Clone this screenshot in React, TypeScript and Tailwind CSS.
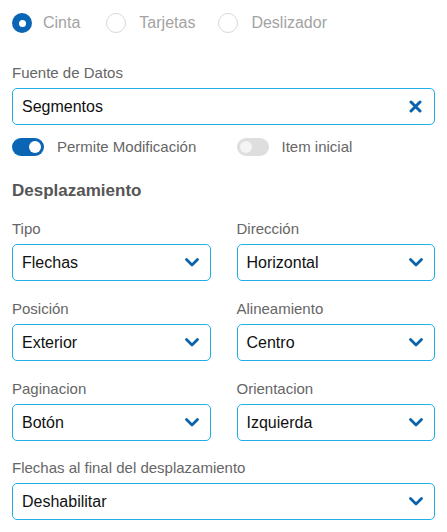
type Option = { label: string; selected?: boolean };

const radios: Option[] = [
  { label: "Cinta", selected: true },
  { label: "Tarjetas" },
  { label: "Deslizador" },
];

const Chevron = () => (
  <svg width="14" height="9" viewBox="0 0 14 9" className="text-[#0a62ad]">
    <polyline points="1.5,1.5 7,7 12.5,1.5" fill="none" stroke="currentColor" strokeWidth="2.8" strokeLinecap="round" strokeLinejoin="round" />
  </svg>
);

const Clear = () => (
  <svg width="13" height="13" viewBox="0 0 13 13" className="text-[#0a62ad]">
    <path d="M2 2 L11 11 M11 2 L2 11" fill="none" stroke="currentColor" strokeWidth="3" strokeLinecap="round" />
  </svg>
);

const Radio = ({ label, selected, className }: Option & { className: string }) => (
  <label className={`flex items-center ${className}`}>
    {selected ? (
      <span className="flex h-5 w-5 items-center justify-center rounded-full bg-[#0a66b5]">
        <span className="h-[7px] w-[7px] rounded-full bg-white" />
      </span>
    ) : (
      <span className="h-5 w-5 rounded-full border border-[#d9d9d9] bg-white" />
    )}
    <span className={`text-[16px] leading-5 text-[#a3a3a3] ${selected ? "ml-[11px]" : "ml-[13px]"}`}>
      {label}
    </span>
  </label>
);

const Toggle = ({ on, label }: { on: boolean; label: string }) => (
  <div className="flex h-[18px] items-center">
    {on ? (
      <span className="flex h-[18px] w-8 items-center justify-end rounded-full bg-[#0a66b5] pr-[3px]">
        <span className="h-3 w-3 rounded-full bg-white" />
      </span>
    ) : (
      <span className="flex h-[18px] w-8 items-center rounded-full bg-[#dedede] pl-[3px]">
        <span className="h-3 w-3 rounded-full bg-[#f4f4f4]" />
      </span>
    )}
    <span className="ml-[13px] text-[15px] leading-[18px] text-[#666]">{label}</span>
  </div>
);

const Select = ({ label, value, className }: { label: string; value: string; className: string }) => (
  <div className={className}>
    <div className="text-[15px] leading-[18px] text-[#666]">{label}</div>
    <div className="mt-[6px] flex h-[37px] items-center justify-between rounded-[5px] border border-[#22ade4] pl-[9px] pr-[11px]">
      <span className="text-[16px] text-[#111]">{value}</span>
      <Chevron />
    </div>
  </div>
);

export default function App() {
  return (
    <div className="h-[532px] w-[447px] bg-white px-3 pt-[13px] font-['Liberation_Sans',Arial,sans-serif]">
      <div className="flex h-5 items-center">
        {radios.map((r, i) => (
          <Radio
            key={r.label}
            {...r}
            className={i === 0 ? "" : i === 1 ? "ml-[26px]" : "ml-[23px]"}
          />
        ))}
      </div>

      <div className="mt-[31px] text-[15px] leading-[18px] text-[#666]">Fuente de Datos</div>
      <div className="mt-[6px] flex h-[37px] items-center justify-between rounded-[5px] border border-[#22ade4] pl-[9px] pr-[12px]">
        <span className="text-[16px] text-[#111]">Segmentos</span>
        <Clear />
      </div>

      <div className="mt-[13px] grid grid-cols-2 gap-x-[26px]">
        <Toggle on label="Permite Modificación" />
        <Toggle on={false} label="Item inicial" />
      </div>

      <div className="mt-[23px] text-[17px] font-bold leading-6 text-[#555]">Desplazamiento</div>

      <div className="grid grid-cols-2 gap-x-[26px]">
        <Select className="mt-[17px]" label="Tipo" value="Flechas" />
        <Select className="mt-[17px]" label="Dirección" value="Horizontal" />
        <Select className="mt-[19px]" label="Posición" value="Exterior" />
        <Select className="mt-[19px]" label="Alineamiento" value="Centro" />
        <Select className="mt-[19px]" label="Paginacion" value="Botón" />
        <Select className="mt-[19px]" label="Orientacion" value="Izquierda" />
      </div>
      <Select className="mt-[18px]" label="Flechas al final del desplazamiento" value="Deshabilitar" />
    </div>
  );
}
